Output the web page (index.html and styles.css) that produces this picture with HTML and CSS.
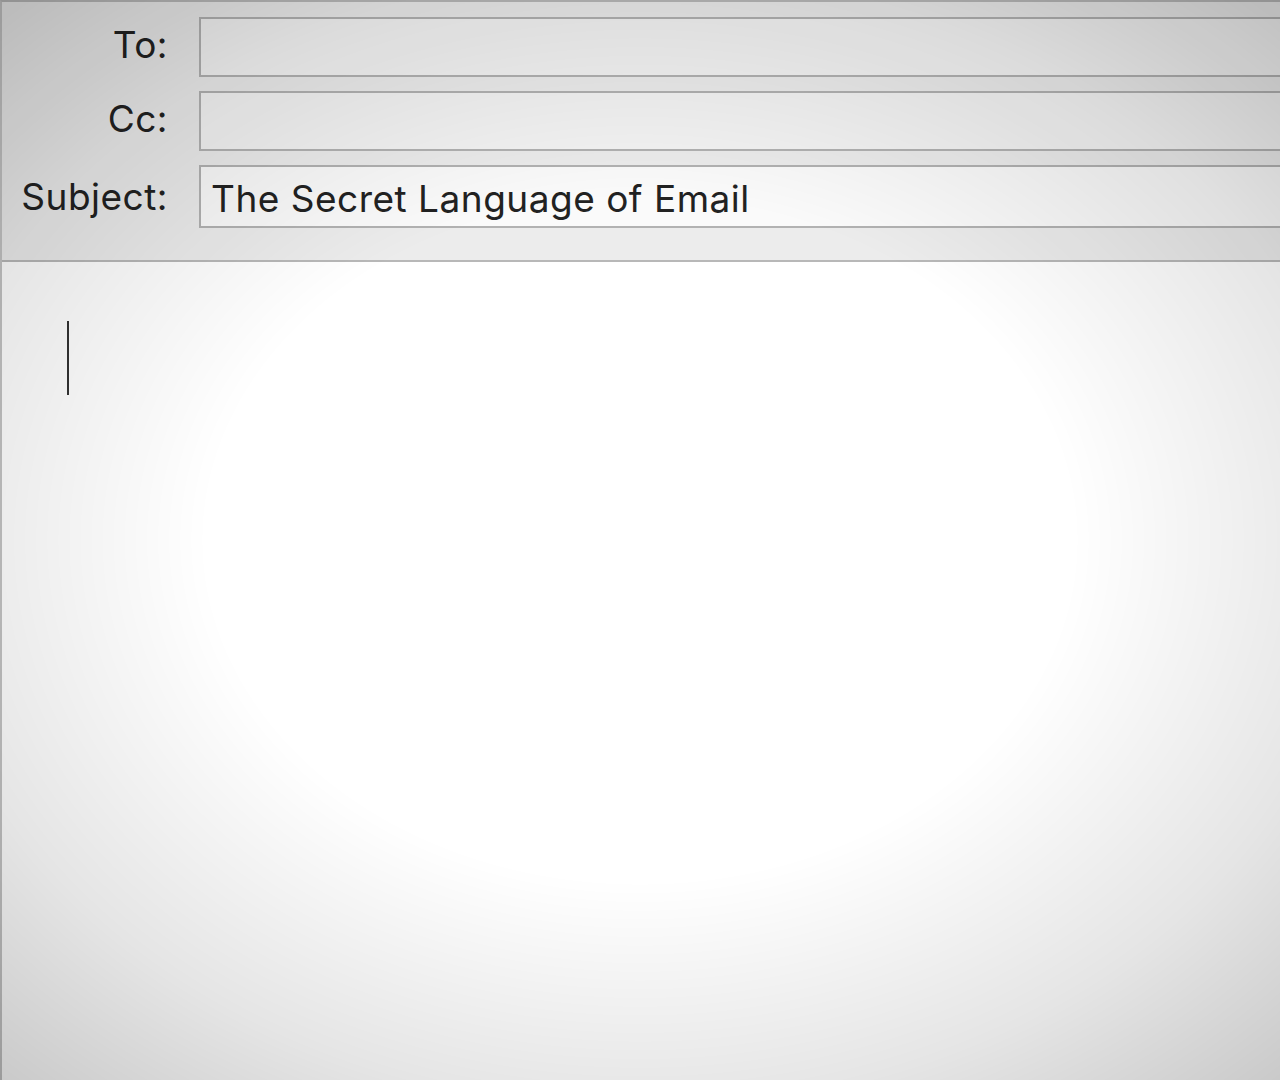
FILE: index.html
```html
<!DOCTYPE html>
<html>
<head>
<meta charset="utf-8">
<link rel="stylesheet" href="styles.css">
</head>
<body>
<div class="window">
  <header class="fields">
    <div class="row">
      <label class="label">To:</label>
      <div class="field"></div>
    </div>
    <div class="row">
      <label class="label">Cc:</label>
      <div class="field"></div>
    </div>
    <div class="row subject">
      <label class="label">Subject:</label>
      <div class="field">The Secret Language of Email</div>
    </div>
  </header>
  <main class="body">
    <span class="caret"></span>
  </main>
</div>
<div class="vignette"></div>
</body>
</html>
```

FILE: styles.css
```css
html, body {
  margin: 0;
  padding: 0;
  height: 100%;
}
body {
  background: #ffffff;
  font-family: Inter, Roboto, "Noto Sans", "Liberation Sans", sans-serif;
  color: #222;
  overflow: hidden;
}
.window {
  height: 1080px;
  border-top: 2px solid #b9b9b9;
  border-left: 2px solid #c4c4c4;
  box-sizing: border-box;
  display: flex;
  flex-direction: column;
}
.fields {
  background: #ececec;
  border-bottom: 2px solid #b8b8b8;
  height: 260px;
  box-sizing: border-box;
  padding-top: 15px;
  display: flex;
  flex-direction: column;
  gap: 14px;
}
.row {
  display: flex;
  align-items: center;
  gap: 31px;
}
.label {
  width: 166px;
  text-align: right;
  font-size: 37px;
  letter-spacing: 0.5px;
  color: #222;
  flex: none;
  position: relative;
  top: -3px;
}
.field {
  flex: 1;
  height: 60px;
  box-sizing: border-box;
  border: 2px solid #b2b2b2;
  border-right: none;
  background: #f4f4f4;
  font-size: 37px;
  letter-spacing: 0.5px;
  line-height: 56px;
  padding-left: 10px;
  color: #222;
}
.subject .field {
  height: 63px;
  line-height: 64px;
  background: #fafafa;
}
.subject .label {
  top: 0;
}
.body {
  flex: 1;
  padding: 59px 0 0 65px;
}
.caret {
  display: block;
  width: 2px;
  height: 74px;
  background: #333;
}
.vignette {
  position: fixed;
  inset: 0;
  pointer-events: none;
  background: radial-gradient(ellipse 75% 70% at 50% 50%, rgba(0,0,0,0) 45%, rgba(0,0,0,0.1) 75%, rgba(0,0,0,0.22) 100%);
}
```
